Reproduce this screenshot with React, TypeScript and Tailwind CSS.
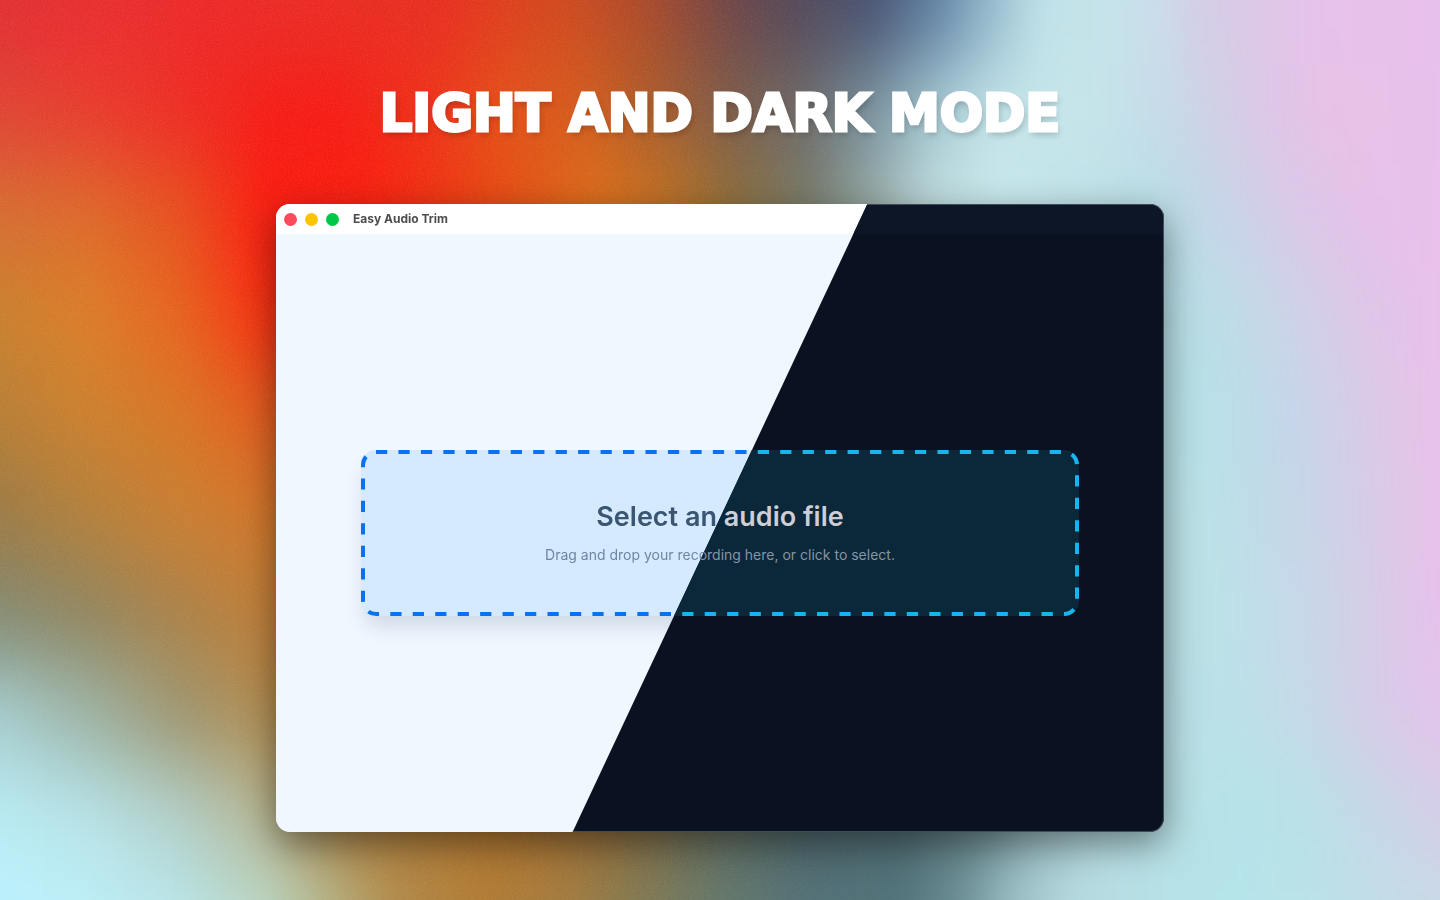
import clsx from 'clsx';

type Mode = 'light' | 'dark';

interface Band {
  y: number;
  stops: [number, string][];
}

// Horizontal colour bands, melted together by a vertical blur
const bands: Band[] = [
  { y: -100, stops: [[0, '#e03034'], [200, '#e92c2e'], [441, '#e62f22'], [505, '#dc3a1f'], [569, '#c84424'], [643, '#a04430'], [735, '#60404c'], [800, '#4c4660'], [872, '#3e4870'], [937, '#5474a0'], [992, '#8fb5cc'], [1050, '#bfe0e8'], [1130, '#c4e0e8'], [1200, '#d4cee6'], [1260, '#ddc8e8'], [1320, '#e7c2e9'], [1440, '#e8c0ec']] },
  { y: 0, stops: [[0, '#e03033'], [90, '#ea2e30'], [200, '#ec292a'], [441, '#e82f20'], [505, '#de401e'], [569, '#cf4b20'], [643, '#ae4b2a'], [735, '#6e474a'], [790, '#584a58'], [872, '#4b5674'], [937, '#6586a6'], [992, '#98bccd'], [1040, '#c0e2e8'], [1110, '#c6e4ea'], [1160, '#ccdcea'], [1200, '#d4cee6'], [1260, '#ddc8e8'], [1320, '#e7c2e9'], [1440, '#e8c0ec']] },
  { y: 100, stops: [[0, '#df4535'], [90, '#e83c2e'], [180, '#ee2d25'], [270, '#f51c16'], [340, '#f61b15'], [430, '#ee331a'], [505, '#e45219'], [588, '#d25e1e'], [643, '#b05e2a'], [735, '#7c5e4c'], [808, '#6f6e6e'], [872, '#7d98a4'], [937, '#aaccd4'], [992, '#c4e4e9'], [1080, '#c6e6ea'], [1160, '#c5dce8'], [1220, '#d2d0e6'], [1280, '#e0c5e8'], [1340, '#e9c2e5'], [1440, '#e8c1ec']] },
  { y: 200, stops: [[0, '#d66e33'], [90, '#dd6a2b'], [180, '#e7501f'], [270, '#fb1a10'], [380, '#f8200f'], [450, '#ee3810'], [520, '#e45114'], [597, '#dd6f1a'], [661, '#c47220'], [735, '#8c6f3a'], [808, '#757b6a'], [872, '#98aaa5'], [930, '#c0dcde'], [1000, '#c8e8ec'], [1080, '#c0e2e8'], [1160, '#b9dde6'], [1220, '#c6d6e8'], [1290, '#d8cae8'], [1360, '#e5c2e8'], [1440, '#e9c1ec']] },
  { y: 300, stops: [[0, '#c9812f'], [90, '#dc7d28'], [180, '#e7631f'], [270, '#f82c10'], [400, '#e83a13'], [700, '#a2742a'], [1000, '#b4dade'], [1160, '#b5dde4'], [1230, '#bedde8'], [1300, '#cfd2e8'], [1370, '#dfc6e8'], [1440, '#e9c1ea']] },
  { y: 400, stops: [[0, '#b87f36'], [90, '#cc802f'], [180, '#d97625'], [270, '#e25a1e'], [500, '#c97020'], [1000, '#b4dade'], [1190, '#b6e1e7'], [1240, '#bcdde8'], [1290, '#c5d6ea'], [1350, '#d4cee8'], [1420, '#e6c3e8'], [1440, '#e8c1ea']] },
  { y: 500, stops: [[0, '#9a7a46'], [90, '#b3803c'], [180, '#c97f33'], [270, '#d2762a'], [600, '#a0702a'], [1000, '#b4dade'], [1200, '#bbe2e7'], [1260, '#c0dbe8'], [1330, '#cdd2e8'], [1400, '#dfc7e8'], [1440, '#e8c2e9']] },
  { y: 600, stops: [[0, '#828a74'], [90, '#8f8560'], [180, '#aa824a'], [270, '#bf7e38'], [600, '#a0702a'], [1000, '#b4dade'], [1210, '#bbe2e7'], [1270, '#c2dcea'], [1340, '#ced3e7'], [1400, '#ddc8e8'], [1440, '#e7c1eb']] },
  { y: 700, stops: [[0, '#a6ced0'], [90, '#9cb3a6'], [180, '#9c9672'], [270, '#b08c50'], [600, '#93652c'], [1000, '#b4dade'], [1230, '#bbe1e8'], [1310, '#c6d9e8'], [1370, '#d6cde8'], [1440, '#e2c5ea']] },
  { y: 800, stops: [[0, '#b8ecf5'], [90, '#b7e3e8'], [180, '#b2cfc8'], [270, '#b4b492'], [350, '#b08546'], [500, '#b0742c'], [600, '#966c38'], [700, '#666a58'], [800, '#4a6468'], [900, '#4c6a70'], [980, '#6c8c92'], [1040, '#9cbec4'], [1110, '#b8dee3'], [1240, '#b5e3e8'], [1310, '#b9e0e7'], [1370, '#c5d9e8'], [1440, '#d4cfe8']] },
  { y: 900, stops: [[0, '#bbf1ff'], [90, '#bdf0fa'], [180, '#b9e7ec'], [270, '#b9d6c4'], [330, '#b3b488'], [400, '#b08a4a'], [480, '#b07c36'], [557, '#a67d40'], [626, '#867c50'], [729, '#617970'], [810, '#54737a'], [901, '#52747c'], [960, '#6d9096'], [1010, '#9abfc5'], [1074, '#b7dbe1'], [1240, '#b5e5ea'], [1350, '#bedfe8'], [1440, '#c8dae6']] },
];

const Backdrop = () => (
  <svg
    className="fixed inset-0 -z-10 h-full w-full"
    viewBox="0 0 1440 900"
    preserveAspectRatio="none"
    aria-hidden="true"
  >
    <defs>
      {bands.map((band) => (
        <linearGradient key={band.y} id={`band${band.y}`} gradientUnits="userSpaceOnUse" x1="0" x2="1440">
          {band.stops.map(([x, color]) => (
            <stop key={x} offset={x / 1440} stopColor={color} />
          ))}
        </linearGradient>
      ))}
      <filter id="melt" filterUnits="userSpaceOnUse" x="-100" y="-200" width="1640" height="1300" colorInterpolationFilters="sRGB">
        <feGaussianBlur stdDeviation="14 40" />
      </filter>
      <filter id="grain" colorInterpolationFilters="sRGB">
        <feTurbulence type="fractalNoise" baseFrequency="0.7" numOctaves="2" seed="4" />
        <feColorMatrix values="0 0 0 0 1  0 0 0 0 0.9  0 0 0 0 0.7  0.9 0 0 0 -0.36" />
      </filter>
      <linearGradient id="fade">
        <stop offset="0" stopColor="#fff" />
        <stop offset="0.5" stopColor="#fff" />
        <stop offset="0.7" stopColor="#000" />
      </linearGradient>
      <mask id="warmSide">
        <rect width="1440" height="900" fill="url(#fade)" />
      </mask>
    </defs>
    <g filter="url(#melt)">
      {bands.map((band) => (
        <rect
          key={band.y}
          x="-100"
          y={band.y === -100 ? -250 : band.y - 35}
          width="1640"
          height={band.y === -100 || band.y === 900 ? 250 : 101}
          fill={`url(#band${band.y})`}
        />
      ))}
    </g>
    <g mask="url(#warmSide)">
      <rect width="1440" height="900" filter="url(#grain)" opacity="0.22" />
    </g>
  </svg>
);

const DropZone = ({ mode }: { mode: Mode }) => {
  const dark = mode === 'dark';

  return (
    <button
      type="button"
      tabIndex={dark ? -1 : 0}
      className={clsx(
        'relative flex w-full cursor-pointer flex-col items-center gap-2 rounded-[15px] px-6 py-[49px]',
        dark
          ? 'bg-[#0b273a]'
          : 'bg-[#d5eaff] shadow-[0_14px_20px_-4px_rgba(15,35,70,0.14)]'
      )}
    >
      {/* Dashed outline */}
      <svg className="absolute inset-0 h-full w-full p-[2px] overflow-visible" aria-hidden="true">
        <rect
          width="100%"
          height="100%"
          rx="13"
          fill="none"
          stroke={dark ? '#18b4ee' : '#0a72f2'}
          strokeWidth="4"
          pathLength="154"
          strokeDasharray="1 1"
        />
      </svg>
      <span className={clsx('text-[27px] leading-9 font-semibold', dark ? 'text-[#cdced6]' : 'text-[#3a5672]')}>
        Select an audio file
      </span>
      <span className={clsx('text-sm leading-6', dark ? 'text-[#8496a5]' : 'text-[#6d86a2]')}>
        Drag and drop your recording here, or click to select.
      </span>
    </button>
  );
};

const AppWindow = ({ mode }: { mode: Mode }) => {
  const dark = mode === 'dark';

  return (
    <section
      aria-hidden={dark}
      className={clsx(
        'col-start-1 row-start-1 flex flex-col overflow-hidden rounded-[14px]',
        dark
          ? 'bg-[#0a1222] inset-ring-1 inset-ring-[#424c59] [clip-path:polygon(66.6%_0,100%_0,100%_100%,33.4%_100%)]'
          : 'bg-[#f0f7ff]'
      )}
    >
      <header
        className={clsx(
          'flex items-center gap-2 px-2',
          dark ? 'mx-px mt-px h-[29px] rounded-t-[13px] bg-[#0c1626]' : 'h-[30px] bg-white'
        )}
      >
        <span className="size-[13px] rounded-full bg-[#fd4b5c]" />
        <span className="size-[13px] rounded-full bg-[#fdc500]" />
        <span className="size-[13px] rounded-full bg-[#00c744]" />
        <span className={clsx('ml-1.5 text-[12px] font-bold', dark ? 'text-[#cdced6]' : 'text-[#4c4c4e]')}>
          Easy Audio Trim
        </span>
      </header>
      <div className="flex flex-1 items-center justify-center px-[85px]">
        <DropZone mode={mode} />
      </div>
    </section>
  );
};

export default function App() {
  return (
    <main className="relative isolate flex min-h-screen flex-col items-center px-6 pt-[82px] pb-16 font-['Inter',sans-serif]">
      <Backdrop />
      <h1 className="text-center font-['DejaVu_Sans',sans-serif] text-[51px] leading-16 font-bold text-white uppercase [-webkit-text-stroke:3px_white] [text-shadow:2px_4px_6px_rgba(0,0,0,0.2)]">
        Light and Dark Mode
      </h1>
      <div className="mt-[58px] grid aspect-[888/628] w-full max-w-[888px] rounded-[14px] shadow-[0_12px_36px_rgba(0,0,0,0.45)]">
        <AppWindow mode="light" />
        <AppWindow mode="dark" />
      </div>
    </main>
  );
}
